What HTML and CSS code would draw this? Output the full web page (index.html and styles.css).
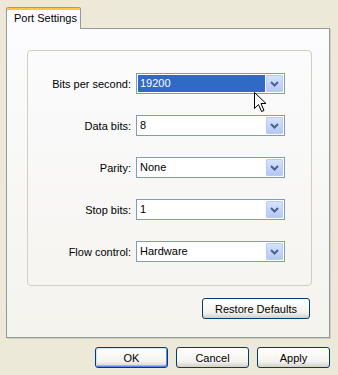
FILE: index.html
```html
<!DOCTYPE html>
<html lang="en">
<head>
  <meta charset="UTF-8" />
  <title>Port Settings</title>
  <link rel="stylesheet" href="styles.css">
</head>
<body>

  <div class="dialog">
    <div class="tabs">
      <div class="tab">Port Settings</div>
    </div>

    <div class="panel">
      <div class="group">
        <label class="field-label">Bits per second:</label>
        <div class="combo">
          <span class="combo-value selected">19200</span>
          <span class="combo-btn"><svg width="9" height="6" viewBox="0 0 9 6"><polyline points="1,1 4.5,4.5 8,1" fill="none" stroke="#4d6185" stroke-width="2"/></svg></span>
        </div>

        <label class="field-label">Data bits:</label>
        <div class="combo">
          <span class="combo-value">8</span>
          <span class="combo-btn"><svg width="9" height="6" viewBox="0 0 9 6"><polyline points="1,1 4.5,4.5 8,1" fill="none" stroke="#4d6185" stroke-width="2"/></svg></span>
        </div>

        <label class="field-label">Parity:</label>
        <div class="combo">
          <span class="combo-value">None</span>
          <span class="combo-btn"><svg width="9" height="6" viewBox="0 0 9 6"><polyline points="1,1 4.5,4.5 8,1" fill="none" stroke="#4d6185" stroke-width="2"/></svg></span>
        </div>

        <label class="field-label">Stop bits:</label>
        <div class="combo">
          <span class="combo-value">1</span>
          <span class="combo-btn"><svg width="9" height="6" viewBox="0 0 9 6"><polyline points="1,1 4.5,4.5 8,1" fill="none" stroke="#4d6185" stroke-width="2"/></svg></span>
        </div>

        <label class="field-label">Flow control:</label>
        <div class="combo">
          <span class="combo-value">Hardware</span>
          <span class="combo-btn"><svg width="9" height="6" viewBox="0 0 9 6"><polyline points="1,1 4.5,4.5 8,1" fill="none" stroke="#4d6185" stroke-width="2"/></svg></span>
        </div>
      </div>

      <div class="restore-row">
        <button class="btn restore">Restore Defaults</button>
      </div>
    </div>

    <div class="actions">
      <button class="btn default">OK</button>
      <button class="btn">Cancel</button>
      <button class="btn">Apply</button>
    </div>
  </div>

  <svg class="cursor" width="13" height="21" viewBox="0 0 13 21">
    <path d="M0.5 0.5 L0.5 16.5 L4.5 12.5 L7.5 19.5 L10 18.5 L7 11.5 L12 11.5 Z" fill="#fff" stroke="#000" stroke-width="1"/>
  </svg>

</body>
</html>
```

FILE: styles.css
```css
body, html {
  margin: 0;
  padding: 0;
  background-color: #ece9d8;
  font-family: 'Liberation Sans', Arial, sans-serif;
  font-size: 11px;
  color: #000;
}

body {
  position: relative;
  width: 338px;
  height: 375px;
  overflow: hidden;
}

.dialog {
  display: flex;
  flex-direction: column;
}

.tabs {
  display: flex;
  padding: 7px 0 0 6px;
}

.tab {
  position: relative;
  z-index: 1;
  box-sizing: border-box;
  width: 75px;
  height: 22px;
  margin-bottom: -1px;
  padding-top: 4px;
  padding-left: 7px;
  background: #fcfcfe;
  border: 1px solid #919b9c;
  border-top: 1px solid #e68b2c;
  border-bottom: none;
  border-radius: 2px 2px 0 0;
  box-shadow: inset 0 2px 0 #ffc73c;
}

.panel {
  box-sizing: border-box;
  width: 324px;
  height: 310px;
  margin-left: 6px;
  border: 1px solid #919b9c;
  background: linear-gradient(#fcfcfe, #f4f3ee);
  box-shadow: 1px 1px 0 #d0cebf;
  display: flex;
  flex-direction: column;
}

.group {
  box-sizing: border-box;
  width: 285px;
  height: 236px;
  margin: 21px 0 0 20px;
  padding-top: 22px;
  border: 1px solid #d0d0bf;
  border-radius: 4px;
  display: grid;
  grid-template-columns: 103px 149px;
  grid-auto-rows: 21px;
  column-gap: 5px;
  row-gap: 21px;
  align-content: start;
}

.field-label {
  text-align: right;
  align-self: center;
}

.combo {
  box-sizing: border-box;
  height: 21px;
  border: 1px solid #7f9db9;
  background: #fff;
  padding: 1px;
  display: flex;
}

.combo-value {
  flex: 1;
  padding-left: 2px;
  margin-right: 1px;
  line-height: 17px;
}

.combo-value.selected {
  background: #316ac5;
  color: #fff;
}

.combo-btn {
  box-sizing: border-box;
  width: 17px;
  height: 17px;
  border: 1px solid #b9cbf3;
  border-radius: 1px;
  background: linear-gradient(#d6e2fd, #c1d3fb 60%, #b4c8f6);
  display: flex;
  justify-content: center;
  align-items: center;
}

.restore-row {
  display: flex;
  justify-content: flex-end;
  padding: 12px 19px 0 0;
}

.btn {
  box-sizing: border-box;
  height: 21px;
  padding: 0;
  font-family: 'Liberation Sans', Arial, sans-serif;
  font-size: 11px;
  color: #000;
  border: 1px solid #003c74;
  border-radius: 3px;
  background: linear-gradient(#ffffff, #f4f3ee 70%, #d6d0c5);
}

.restore {
  width: 108px;
}

.actions {
  display: flex;
  justify-content: flex-end;
  gap: 8px;
  padding: 9px 8px 0 0;
}

.actions .btn {
  width: 73px;
}

.btn.default {
  box-shadow: inset 1px 1px 0 #cee7ff, inset -1px -1px 0 #6982ee, inset 0 -2px 0 #98b2f2;
}

.cursor {
  position: absolute;
  left: 254px;
  top: 92px;
}
```
